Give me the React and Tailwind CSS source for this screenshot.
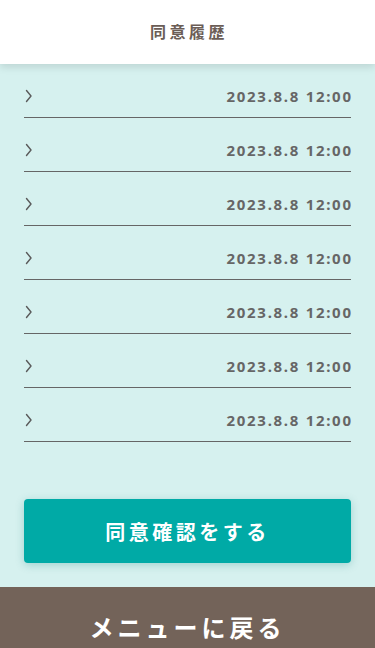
const rows = Array.from({ length: 7 }, () => "2023.8.8 12:00");

const Chevron = () => (
  <svg width="8" height="14" viewBox="0 0 8 14" fill="none" className="shrink-0">
    <path d="M1.5 1.5 L6 7 L1.5 12.5" stroke="#5a5a5a" strokeWidth="1.4" strokeLinecap="round" strokeLinejoin="round" />
  </svg>
);

const App = () => {
  return (
    <div
      className="min-h-[648px] bg-[#d6f1ef] flex flex-col"
      style={{ fontFamily: '"Noto Sans", "Noto Sans CJK JP", sans-serif' }}
    >
      {/* Header */}
      <header className="h-16 bg-white flex items-center justify-center shadow-[0_3px_8px_rgba(0,0,0,0.12)] relative z-10">
        <h1 className="text-[16px] font-bold tracking-[3.5px] text-[#6b5d56] pl-[3px]">同意履歴</h1>
      </header>

      {/* History list */}
      <ul className="mx-6">
        {rows.map((date, idx) => (
          <li
            key={idx}
            className="h-[54px] border-b border-[#666] flex items-center justify-between pt-[10px] pl-[1px]"
          >
            <Chevron />
            <span className="text-[15px] font-bold tracking-[1.7px] text-[#666] leading-5 mr-[-1.7px]">{date}</span>
          </li>
        ))}
      </ul>

      {/* Confirm button */}
      <div className="px-6 pt-[57px] pb-6">
        <button className="w-full h-16 rounded-[4px] bg-[#00aaa6] text-white text-[20px] font-bold tracking-[3.5px] pt-[3px] shadow-[0_2px_8px_rgba(0,120,115,0.25)]">
          同意確認をする
        </button>
      </div>

      {/* Footer */}
      <div className="bg-[#736359] flex-1 flex items-start justify-center pt-[25px] min-h-[64px]">
        <span className="text-white text-[24px] font-bold tracking-[4px] leading-8">メニューに戻る</span>
      </div>
    </div>
  );
};

export default App;
